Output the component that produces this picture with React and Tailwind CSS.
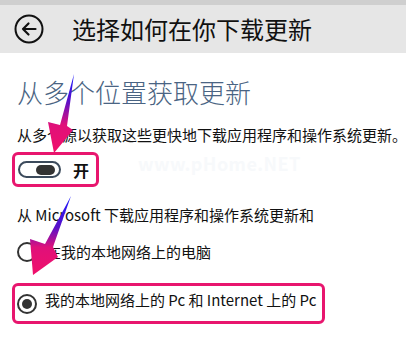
import React from "react";

const font = { fontFamily: '"Noto Sans CJK SC", "Noto Sans", sans-serif' };

function Radio({ checked }) {
  return (
    <div className="w-[20px] h-[20px] rounded-full border-[2px] border-[#333] flex items-center justify-center shrink-0">
      {checked && <div className="w-[10px] h-[10px] rounded-full bg-[#333]" />}
    </div>
  );
}

export default function App() {
  return (
    <div className="relative w-[406px] h-[343px] bg-white overflow-hidden" style={font}>
      <div className="h-[53px] bg-[#e6e6e6] border-t-[5px] border-[#cfcfcf] flex items-center pl-[14px]">
        <svg width="30" height="30" viewBox="0 0 30 30" className="shrink-0">
          <circle cx="15" cy="15" r="13.5" fill="none" stroke="#111" strokeWidth="2" />
          <path d="M21.5 15H9M14.5 9.5L9 15l5.5 5.5" fill="none" stroke="#111" strokeWidth="2.2" strokeLinecap="round" strokeLinejoin="round" />
        </svg>
        <div className="ml-[28px] text-[24px] leading-[30px] text-[#111]">选择如何在你下载更新</div>
      </div>

      <div className="pl-[17px]">
        <div className="mt-[23px] text-[26px] leading-[32px] font-light text-[#4a6483]">从多个位置获取更新</div>
        <div className="mt-[17px] text-[15px] leading-[20px] text-[#111] whitespace-nowrap">从多个源以获取这些更快地下载应用程序和操作系统更新。</div>

        <div className="mt-[7px] -ml-[5px] w-[87px] h-[35px] border-[3px] border-[#e8166e] rounded-[6px] flex items-center pl-[3px]">
          <div className="w-[43px] h-[17px] rounded-full border-[2px] border-[#3c4b5c] flex items-center justify-end pr-[4px]">
            <div className="w-[19px] h-[10px] rounded-full bg-[#333]" />
          </div>
          <div className="ml-[12px] text-[16px] font-bold text-[#111] leading-[20px]">开</div>
        </div>

        <div className="mt-[18px] text-[15px] leading-[20px] text-[#111] whitespace-nowrap">从 Microsoft 下载应用程序和操作系统更新和</div>

        <div className="mt-[17px] flex items-center h-[20px]">
          <Radio checked={false} />
          <div className="ml-[9px] text-[15px] leading-[20px] text-[#111]">在我的本地网络上的电脑</div>
        </div>

        <div className="mt-[21px] -ml-[5px] w-[313px] h-[41px] border-[3px] border-[#e8166e] rounded-[6px] flex items-center pl-[2px]">
          <Radio checked={true} />
          <div className="ml-[8px] text-[15px] leading-[20px] text-[#111] whitespace-nowrap -mt-[8px]">我的本地网络上的 Pc 和 Internet 上的 Pc</div>
        </div>
      </div>

      <div className="absolute left-[138px] top-[150px] text-[18px] text-[#f7f9fb] font-bold tracking-wide">www.pHome.NET</div>

      <svg className="absolute left-0 top-0 pointer-events-none" width="406" height="343" viewBox="0 0 406 343">
        <defs>
          <linearGradient id="g1" x1="0" y1="74" x2="0" y2="152" gradientUnits="userSpaceOnUse">
            <stop offset="0" stopColor="#1a1aff" />
            <stop offset="0.35" stopColor="#5a10c8" />
            <stop offset="0.65" stopColor="#e0107a" />
            <stop offset="1" stopColor="#f0106a" />
          </linearGradient>
          <linearGradient id="g2" x1="0" y1="196" x2="0" y2="275" gradientUnits="userSpaceOnUse">
            <stop offset="0" stopColor="#1a1aff" />
            <stop offset="0.4" stopColor="#5a10c8" />
            <stop offset="0.65" stopColor="#e0107a" />
            <stop offset="1" stopColor="#f0106a" />
          </linearGradient>
        </defs>
        <polygon points="74,74 67,126 73,130 54,153 48,122 60,125" fill="url(#g1)" />
        <polygon points="71,196 53,247 58,257 33,275 30,239 45,244" fill="url(#g2)" />
      </svg>
    </div>
  );
}
